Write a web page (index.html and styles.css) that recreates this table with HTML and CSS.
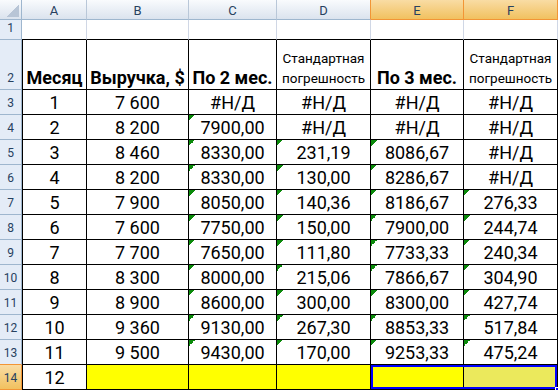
FILE: index.html
```html
<!DOCTYPE html>
<html>
<head>
<meta charset="utf-8">
<link rel="stylesheet" href="styles.css">
</head>
<body>
<div class="sheet">
  <div class="grid">
    <div class="ch corner"></div>
    <div class="ch">A</div>
    <div class="ch">B</div>
    <div class="ch">C</div>
    <div class="ch pre-sel">D</div>
    <div class="ch sel">E</div>
    <div class="ch sel">F</div>

    <div class="rh">1</div>
    <div class="c r1"></div><div class="c r1"></div><div class="c r1"></div><div class="c r1"></div><div class="c r1"></div><div class="c r1"></div>

    <div class="rh">2</div>
    <div class="c t first"><b>Месяц</b></div>
    <div class="c t"><b>Выручка, $</b></div>
    <div class="c t"><b>По 2 мес.</b></div>
    <div class="c t small">Стандартная погрешность</div>
    <div class="c t"><b>По 3 мес.</b></div>
    <div class="c t small">Стандартная погрешность</div>

    <div class="rh">3</div>
    <div class="c t first">1</div><div class="c t">7 600</div><div class="c t">#Н/Д</div><div class="c t">#Н/Д</div><div class="c t">#Н/Д</div><div class="c t">#Н/Д</div>

    <div class="rh">4</div>
    <div class="c t first">2</div><div class="c t">8 200</div><div class="c t g">7900,00</div><div class="c t">#Н/Д</div><div class="c t">#Н/Д</div><div class="c t">#Н/Д</div>

    <div class="rh">5</div>
    <div class="c t first">3</div><div class="c t">8 460</div><div class="c t g">8330,00</div><div class="c t g">231,19</div><div class="c t g">8086,67</div><div class="c t">#Н/Д</div>

    <div class="rh">6</div>
    <div class="c t first">4</div><div class="c t">8 200</div><div class="c t g">8330,00</div><div class="c t g">130,00</div><div class="c t g">8286,67</div><div class="c t">#Н/Д</div>

    <div class="rh">7</div>
    <div class="c t first">5</div><div class="c t">7 900</div><div class="c t g">8050,00</div><div class="c t g">140,36</div><div class="c t g">8186,67</div><div class="c t g">276,33</div>

    <div class="rh">8</div>
    <div class="c t first">6</div><div class="c t">7 600</div><div class="c t g">7750,00</div><div class="c t g">150,00</div><div class="c t g">7900,00</div><div class="c t g">244,74</div>

    <div class="rh">9</div>
    <div class="c t first">7</div><div class="c t">7 700</div><div class="c t g">7650,00</div><div class="c t g">111,80</div><div class="c t g">7733,33</div><div class="c t g">240,34</div>

    <div class="rh">10</div>
    <div class="c t first">8</div><div class="c t">8 300</div><div class="c t g">8000,00</div><div class="c t g">215,06</div><div class="c t g">7866,67</div><div class="c t g">304,90</div>

    <div class="rh">11</div>
    <div class="c t first">9</div><div class="c t">8 900</div><div class="c t g">8600,00</div><div class="c t g">300,00</div><div class="c t g">8300,00</div><div class="c t g">427,74</div>

    <div class="rh">12</div>
    <div class="c t first">10</div><div class="c t">9 360</div><div class="c t g">9130,00</div><div class="c t g">267,30</div><div class="c t g">8853,33</div><div class="c t g">517,84</div>

    <div class="rh pre-selr">13</div>
    <div class="c t first">11</div><div class="c t">9 500</div><div class="c t g">9430,00</div><div class="c t g">170,00</div><div class="c t g">9253,33</div><div class="c t g">475,24</div>

    <div class="rh selr">14</div>
    <div class="c t first">12</div><div class="c t y"></div><div class="c t y"></div><div class="c t y"></div><div class="c t y"></div><div class="c t ys"></div>
  </div>
  <div class="selection"><span class="handle"></span></div>
</div>
</body>
</html>
```

FILE: styles.css
```css
* { box-sizing: border-box; }
html, body { margin: 0; padding: 0; background: #ffffff; }
body { font-family: Roboto, "Liberation Sans", Arial, sans-serif; color: #000; }

.sheet { position: relative; width: 558px; height: 390px; overflow: hidden; }

.grid {
  display: grid;
  grid-template-columns: 22px 65px 102px 88px 94px 93px 94px;
  grid-template-rows: 20px 20px 50px repeat(12, 25px);
}

.ch {
  background: linear-gradient(#f9fbfd, #dbe3ee);
  border-right: 1px solid #b9c7d8;
  border-bottom: 1px solid #9eb6ce;
  color: #27415f;
  font-size: 13px;
  display: flex;
  align-items: center;
  justify-content: center;
  padding-top: 1px;
}
.ch.corner {
  background:
    linear-gradient(to bottom right, transparent 50%, #b8c5d6 50%) right 2px bottom 2px / 13px 13px no-repeat,
    linear-gradient(#f9fbfd, #dbe3ee);
  border-right-color: #9eb6ce;
}
.ch.pre-sel { border-right-color: #f29536; }
.ch.sel {
  background: linear-gradient(#f9dca4, #f1c15f);
  border-right-color: #f29536;
  border-bottom-color: #f29536;
  color: #27415f;
}

.rh {
  background: #e4ecf7;
  border-right: 1px solid #9eb6ce;
  border-bottom: 1px solid #9eb6ce;
  color: #27415f;
  font-size: 12px;
  display: flex;
  align-items: flex-end;
  justify-content: center;
  padding-bottom: 4px;
  line-height: 14px;
}
.rh.pre-selr { border-bottom-color: #f29536; }
.rh.selr {
  background: linear-gradient(#f9dca4, #f1c15f);
  border-right-color: #f29536;
  border-bottom-color: #f29536;
}

.c {
  border-right: 1px solid #d0d7e5;
  border-bottom: 1px solid #000;
}
.c.t {
  border-right-color: #000;
  display: flex;
  align-items: flex-end;
  justify-content: center;
  text-align: center;
  font-size: 18px;
  line-height: 20px;
  padding-bottom: 1px;
  white-space: nowrap;
}
.c.first { border-left: 1px solid #000; }
.c.small {
  white-space: normal;
  font-size: 13.5px;
  line-height: 20px;
  padding: 0 2px 1px;
}
.c b { font-weight: 700; }

.c.g {
  background: linear-gradient(to bottom right, #0b8a0b 50%, transparent 50%) left top / 6px 6px no-repeat;
}
.c.y { background: #ffff00; }
.c.ys { background: #ebe95c; }

.selection {
  position: absolute;
  left: 371px;
  top: 365px;
  width: 186px;
  height: 24px;
  border: 2px solid #0000ff;
}
.handle {
  position: absolute;
  right: -5px;
  bottom: -5px;
  width: 5px;
  height: 5px;
  background: #0000ff;
  border: 1px solid #fff;
}
```
